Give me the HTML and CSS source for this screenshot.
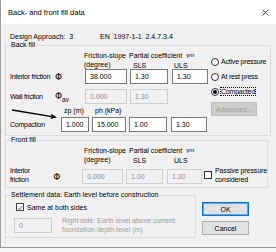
FILE: index.html
```html
<!DOCTYPE html>
<html lang="en">
<head>
  <meta charset="UTF-8" />
  <title>Back- and front fill data</title>
  <link rel="stylesheet" href="styles.css">
</head>
<body>
  <div class="dlg">
    <div class="titlebar">
      <span>Back- and front fill data</span>
      <svg class="close" width="7" height="7" viewBox="0 0 7 7"><path d="M0.5 0.5L6.5 6.5M6.5 0.5L0.5 6.5" stroke="#222" stroke-width="0.8" fill="none"/></svg>
    </div>

    <div class="content">
      <div class="approach">
        <span class="da">Design Approach:&nbsp; 3</span>
        <span>EN&nbsp; 1997-1-1&nbsp; 2.4.7.3.4</span>
      </div>

      <!-- back fill -->
      <fieldset class="grp back">
        <legend>Back fill</legend>
        <div class="back-body">
          <div class="back-left">
            <div class="hdr">
              <div class="h1">Friction-slope<br>(degree)</div>
              <div class="h2">
                <div>Partial coefficient <span class="gm">γm</span></div>
                <div class="slsuls"><span class="sls">SLS</span><span>ULS</span></div>
              </div>
            </div>
            <div class="row">
              <span class="lbl">Interior friction</span>
              <span class="phi">Φ</span>
              <span class="box a">38.000</span>
              <span class="box b">1.30</span>
              <span class="box c">1.30</span>
            </div>
            <div class="row r2">
              <span class="lbl">Wall friction</span>
              <span class="phi">Φ<sub>av</sub></span>
              <span class="box a off">0.000</span>
              <span class="box b off">1.30</span>
            </div>
            <div class="zprow">
              <span class="zp">zp (m)</span>
              <span>ph (kPa)</span>
            </div>
            <div class="row">
              <span class="lbl wide">Compaction</span>
              <span class="box d">1.000</span>
              <span class="box e">15.000</span>
              <span class="box b">1.00</span>
              <span class="box c">1.30</span>
            </div>
            <svg class="arrow" width="50" height="16" viewBox="0 0 50 16">
              <path d="M2 4L42 10.6" stroke="#000" stroke-width="1.4" fill="none"/>
              <polygon points="47,11.6 40.6,12.9 41.6,8" fill="#000"/>
            </svg>
          </div>
          <div class="back-right">
            <label class="opt"><span class="rb"></span>Active pressure</label>
            <label class="opt"><span class="rb"></span>At rest press</label>
            <label class="opt"><span class="rb on"></span><span class="focus">Compacted</span></label>
            <span class="btn adv">Advanced...</span>
          </div>
        </div>
      </fieldset>

      <!-- front fill -->
      <fieldset class="grp front">
        <legend>Front fill</legend>
        <div class="hdr">
          <div class="h1">Friction-slope<br>(degree)</div>
          <div class="h2">
            <div>Partial coefficient <span class="gm">γm</span></div>
            <div class="slsuls"><span class="sls">SLS</span><span>ULS</span></div>
          </div>
        </div>
        <div class="frow">
          <span class="lbl two">Interior<br>friction</span>
          <span class="phi">Φ</span>
          <span class="box a off">0.000</span>
          <span class="box b off">1.00</span>
          <span class="box c off">1.30</span>
          <label class="chk-opt"><span class="cb"></span><span>Passive pressure<br>considered</span></label>
        </div>
      </fieldset>

      <div class="bottom">
        <fieldset class="grp settle">
          <legend>Settlement data: Earth level before construction</legend>
          <label class="same"><span class="cb on">
            <svg width="8" height="8" viewBox="0 0 8 8"><path d="M1.2 4.2L3.2 6.2L7 1.6" stroke="#222" stroke-width="0.9" fill="none"/></svg>
          </span>Same at both sides</label>
          <div class="srow">
            <span class="box f off">0</span>
            <span class="note">Right side: Earth level above current<br>foundation depth level (m)</span>
          </div>
        </fieldset>
        <div class="buttons">
          <span class="btn ok">OK</span>
          <span class="btn">Cancel</span>
        </div>
      </div>
    </div>
  </div>
</body>
</html>
```

FILE: styles.css
```css
* { box-sizing: border-box; }

html, body {
  margin: 0;
  padding: 0;
  background: #fafafa;
  color: #000;
  font-family: "Liberation Sans", Arial, sans-serif;
  font-size: 7px;
}

.dlg {
  width: 276px;
  height: 248px;
  overflow: hidden;
  background: #f0f0f0;
  border-left: 1px solid #9a9a9a;
  border-bottom: 1px solid #9a9a9a;
}

.titlebar {
  height: 24px;
  background: #fff;
  display: flex;
  align-items: center;
  justify-content: space-between;
  padding: 0 7px;
  font-size: 7.5px;
}

.content { padding-left: 4px; }

.approach {
  display: flex;
  align-items: center;
  height: 10px;
  margin-top: 7px;
  padding-left: 5px;
}

.approach .da { width: 90px; }

fieldset.grp {
  margin: 0;
  min-width: 0;
  border: 1px solid #dcdcdc;
  padding: 2px 0 3px 4px;
}

legend {
  padding: 0 1px;
  line-height: 8px;
}

.back {
  margin-top: 6px;
  width: 266px;
  padding: 3px 0 8px 4px;
}

.back-body { display: flex; }

.back-left {
  position: relative;
  width: 200px;
}

.back-right {
  display: flex;
  flex-direction: column;
  align-items: flex-start;
  padding-top: 3px;
  white-space: nowrap;
  letter-spacing: -0.2px;
}

.hdr {
  display: flex;
  height: 18px;
  line-height: 9px;
  white-space: nowrap;
}

.hdr .h1 { margin-left: 74px; width: 45px; }

.slsuls { padding-left: 4px; display: flex; }
.slsuls .sls { width: 41px; }

.gm { font-size: 6px; position: relative; top: -1px; margin-left: 2px; }

.row {
  display: flex;
  align-items: center;
  height: 15px;
  white-space: nowrap;
}

.row.r2 { margin-top: 5px; }

.lbl { width: 43px; letter-spacing: -0.25px; }
.lbl.wide { width: 51px; }

.phi {
  width: 32px;
  font-family: "DejaVu Sans", sans-serif;
  font-size: 9px;
  padding-left: 2px;
}

.phi sub { font-family: "Liberation Sans", sans-serif; font-size: 6.5px; }

.box {
  height: 15px;
  border: 1px solid #7a7a7a;
  background: #fff;
  padding: 0 4px;
  display: flex;
  align-items: center;
}

.box.off {
  border-color: #cfcfcf;
  background: #f0f0f0;
  color: #8f8f8f;
}

.box.a { width: 42px; }
.box.b { width: 38px; margin-left: 3px; }
.box.c { width: 36px; margin-left: 4px; }
.box.d { width: 28px; }
.box.e { width: 34px; margin-left: 3px; }
.box.f { width: 38px; margin-left: 4px; }

.zprow {
  display: flex;
  align-items: center;
  height: 13px;
  padding-left: 54px;
}

.zprow .zp { width: 31px; }

.arrow {
  position: absolute;
  left: 0;
  top: 55px;
}

.opt {
  display: flex;
  align-items: center;
  height: 15px;
  padding-left: 1px;
}

.rb {
  width: 8px;
  height: 8px;
  border: 1px solid #333;
  border-radius: 50%;
  background: #fff;
  margin-right: 2px;
  display: flex;
  align-items: center;
  justify-content: center;
}

.rb.on::after {
  content: "";
  width: 4px;
  height: 4px;
  border-radius: 50%;
  background: #000;
}

.focus { outline: 1px dotted #000; }

.btn {
  height: 14px;
  border: 1px solid #adadad;
  background: #e1e1e1;
  display: flex;
  align-items: center;
  justify-content: center;
}

.adv {
  width: 46px;
  margin: 3px 0 0 1px;
  background: #cccccc;
  border-color: #bfbfbf;
  color: #a3a3a3;
  letter-spacing: 0;
}

.front {
  margin-top: 15px;
  width: 263px;
  padding: 2px 0 0 4px;
}

.frow {
  display: flex;
  height: 20px;
  align-items: flex-end;
  white-space: nowrap;
}

.frow .lbl.two {
  align-self: flex-start;
  line-height: 9px;
  margin-top: 2px;
}

.frow .phi { align-self: center; padding-top: 6px; }

.chk-opt {
  align-self: center;
  display: flex;
  align-items: center;
  margin-left: 2px;
  line-height: 9px;
  padding-top: 2px;
  letter-spacing: -0.1px;
}

.cb {
  width: 8px;
  height: 8px;
  border: 1px solid #333;
  background: #fff;
  margin-right: 3px;
  display: flex;
}

.bottom {
  display: flex;
  margin-top: 3px;
}

.settle {
  width: 191px;
  padding: 2px 0 4px 4px;
}

.same {
  display: flex;
  align-items: center;
  height: 12px;
  margin-left: 6px;
}

.same .cb { margin-right: 3px; border-color: #444; }

.srow {
  display: flex;
  align-items: center;
  margin-top: 3px;
  white-space: nowrap;
}

.note {
  margin-left: 10px;
  line-height: 9px;
  color: #a0a0a0;
}

.buttons {
  display: flex;
  flex-direction: column;
  gap: 5px;
  margin-left: 6px;
  padding-top: 11px;
}

.buttons .btn { width: 47px; }

.btn.ok {
  border-color: #0078d7;
  box-shadow: inset 0 0 0 1px #5aa4e6;
}
```
